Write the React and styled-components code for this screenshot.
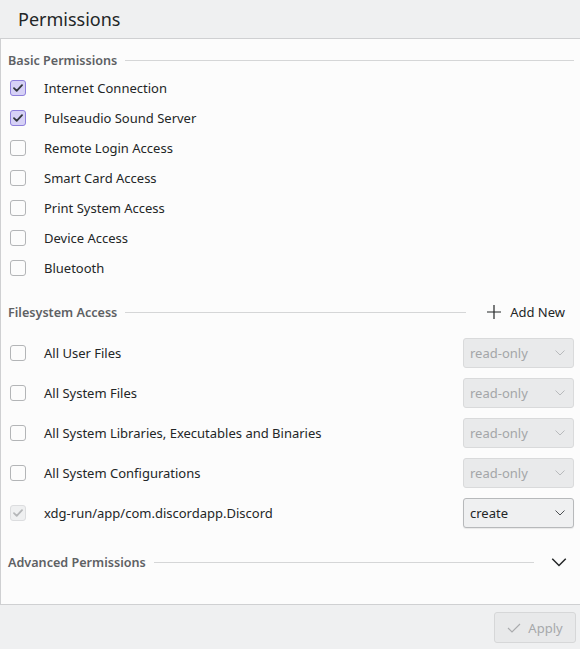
import React from 'react';
import styled, { createGlobalStyle } from 'styled-components';

const GlobalStyle = createGlobalStyle`
  html, body {
    margin: 0;
    padding: 0;
    background: #eff0f1;
    font-family: "Noto Sans", "Open Sans", sans-serif;
    color: #232627;
  }
`;

const basicPermissions = [
  { label: 'Internet Connection', checked: true },
  { label: 'Pulseaudio Sound Server', checked: true },
  { label: 'Remote Login Access', checked: false },
  { label: 'Smart Card Access', checked: false },
  { label: 'Print System Access', checked: false },
  { label: 'Device Access', checked: false },
  { label: 'Bluetooth', checked: false },
];

const filesystems = [
  { label: 'All User Files', mode: 'read-only', disabled: true },
  { label: 'All System Files', mode: 'read-only', disabled: true },
  { label: 'All System Libraries, Executables and Binaries', mode: 'read-only', disabled: true },
  { label: 'All System Configurations', mode: 'read-only', disabled: true },
  { label: 'xdg-run/app/com.discordapp.Discord', mode: 'create', disabled: false, locked: true },
];

function CheckMark({ color }) {
  return (
    <svg width="10" height="8" viewBox="0 0 10 8" fill="none">
      <path d="M1 4.2 L3.7 6.8 L9 1.2" stroke={color} strokeWidth="1.8" strokeLinecap="round" strokeLinejoin="round" />
    </svg>
  );
}

function Chevron({ size = 10, color = '#232627' }) {
  return (
    <svg width={size} height={size / 2 + 1} viewBox="0 0 10 6" fill="none">
      <path d="M0.5 0.5 L5 5 L9.5 0.5" stroke={color} strokeWidth="1" />
    </svg>
  );
}

function Box({ checked, locked }) {
  if (locked) {
    return (
      <CheckBox $locked>
        <CheckMark color="#b5b7b9" />
      </CheckBox>
    );
  }
  return <CheckBox $checked={checked}>{checked && <CheckMark color="#31363b" />}</CheckBox>;
}

export default function App() {
  return (
    <>
      <GlobalStyle />
      <Page>
        <Header>Permissions</Header>
        <Panel>
          <SectionHeader>
            <SectionTitle>Basic Permissions</SectionTitle>
            <Rule />
          </SectionHeader>
          {basicPermissions.map((p) => (
            <CheckRow key={p.label}>
              <Box checked={p.checked} />
              <Label>{p.label}</Label>
            </CheckRow>
          ))}

          <SectionHeader $gap={16}>
            <SectionTitle>Filesystem Access</SectionTitle>
            <Rule />
            <AddButton>
              <svg width="16" height="16" viewBox="0 0 16 16">
                <path d="M8 1 V15 M1 8 H15" stroke="#232627" strokeWidth="1.2" />
              </svg>
              Add New
            </AddButton>
          </SectionHeader>
          <FsList>
            {filesystems.map((f) => (
              <FsRow key={f.label}>
                <Box locked={f.locked} />
                <Label>{f.label}</Label>
                <Combo $disabled={f.disabled}>
                  <span>{f.mode}</span>
                  <Chevron size={10} color={f.disabled ? '#b8babc' : '#4d5053'} />
                </Combo>
              </FsRow>
            ))}
          </FsList>

          <SectionHeader $gap={16}>
            <SectionTitle>Advanced Permissions</SectionTitle>
            <Rule />
            <Expander>
              <Chevron size={16} />
            </Expander>
          </SectionHeader>
        </Panel>
        <Footer>
          <ApplyButton disabled>
            <svg width="14" height="10" viewBox="0 0 14 10" fill="none">
              <path d="M1 5 L5 9 L13 1" stroke="#a9abad" strokeWidth="1.1" />
            </svg>
            Apply
          </ApplyButton>
        </Footer>
      </Page>
    </>
  );
}

const Page = styled.div`
  width: 580px;
  height: 649px;
  display: flex;
  flex-direction: column;
  overflow: hidden;
`;

const Header = styled.div`
  height: 38px;
  box-sizing: border-box;
  padding: 0 0 0 18px;
  display: flex;
  align-items: center;
  font-size: 18px;
  color: #232627;
`;

const Panel = styled.div`
  height: 567px;
  box-sizing: border-box;
  background: #fcfcfc;
  border-top: 1px solid #cfd0d2;
  border-left: 1px solid #cfd0d2;
  border-bottom: 1px solid #cfd0d2;
  padding: 8px 6px 0 7px;
  display: flex;
  flex-direction: column;
`;

const SectionHeader = styled.div`
  height: 26px;
  margin-top: ${(p) => p.$gap || 0}px;
  display: flex;
  align-items: center;
`;

const SectionTitle = styled.span`
  font-size: 12.6px;
  font-weight: 600;
  color: #5e6164;
  white-space: nowrap;
`;

const Rule = styled.div`
  flex: 1;
  height: 1px;
  background: #d5d6d7;
  margin-left: 8px;
`;

const AddButton = styled.div`
  display: flex;
  align-items: center;
  gap: 8px;
  margin-left: 20px;
  margin-right: 9px;
  font-size: 13px;
  color: #232627;
`;

const Expander = styled.div`
  display: flex;
  align-items: center;
  margin-left: 17px;
  margin-right: 7px;
`;

const CheckRow = styled.div`
  height: 30px;
  display: flex;
  align-items: center;
  padding-left: 2px;
`;

const CheckBox = styled.div`
  width: 16px;
  height: 16px;
  box-sizing: border-box;
  border-radius: 3px;
  flex-shrink: 0;
  display: flex;
  align-items: center;
  justify-content: center;
  border: 1px solid ${(p) => (p.$checked ? '#8d7fdb' : p.$locked ? '#dcdddf' : '#b3b5b7')};
  background: ${(p) => (p.$checked ? '#d6d1f6' : p.$locked ? '#eff0f1' : '#fcfcfc')};
`;

const Label = styled.span`
  margin-left: 18px;
  font-size: 13px;
  color: #232627;
  flex: 1;
  white-space: nowrap;
`;

const FsList = styled.div`
  margin-top: 8px;
  display: flex;
  flex-direction: column;
`;

const FsRow = styled.div`
  height: 40px;
  display: flex;
  align-items: center;
  padding-left: 2px;
`;

const Combo = styled.div`
  width: 111px;
  height: 30px;
  box-sizing: border-box;
  border-radius: 3px;
  border: 1px solid ${(p) => (p.$disabled ? '#d9dadb' : '#b7b9bb')};
  background: ${(p) => (p.$disabled ? '#e9eaeb' : '#eff0f1')};
  color: ${(p) => (p.$disabled ? '#a4a6a8' : '#232627')};
  display: flex;
  align-items: center;
  justify-content: space-between;
  padding: 0 8px 0 6px;
  font-size: 13px;
  box-shadow: ${(p) => (p.$disabled ? 'none' : '0 1px 1px rgba(0,0,0,0.08)')};
`;

const Footer = styled.div`
  flex: 1;
  display: flex;
  justify-content: flex-end;
  align-items: flex-start;
  padding: 7px 4px 0 0;
`;

const ApplyButton = styled.button`
  width: 82px;
  height: 31px;
  box-sizing: border-box;
  border-radius: 3px;
  border: 1px solid #d6d7d8;
  background: #e8e9ea;
  color: #a6a8aa;
  font-family: "Noto Sans", "Open Sans", sans-serif;
  font-size: 13px;
  display: flex;
  align-items: center;
  justify-content: center;
  gap: 7px;
  padding: 0;
`;
